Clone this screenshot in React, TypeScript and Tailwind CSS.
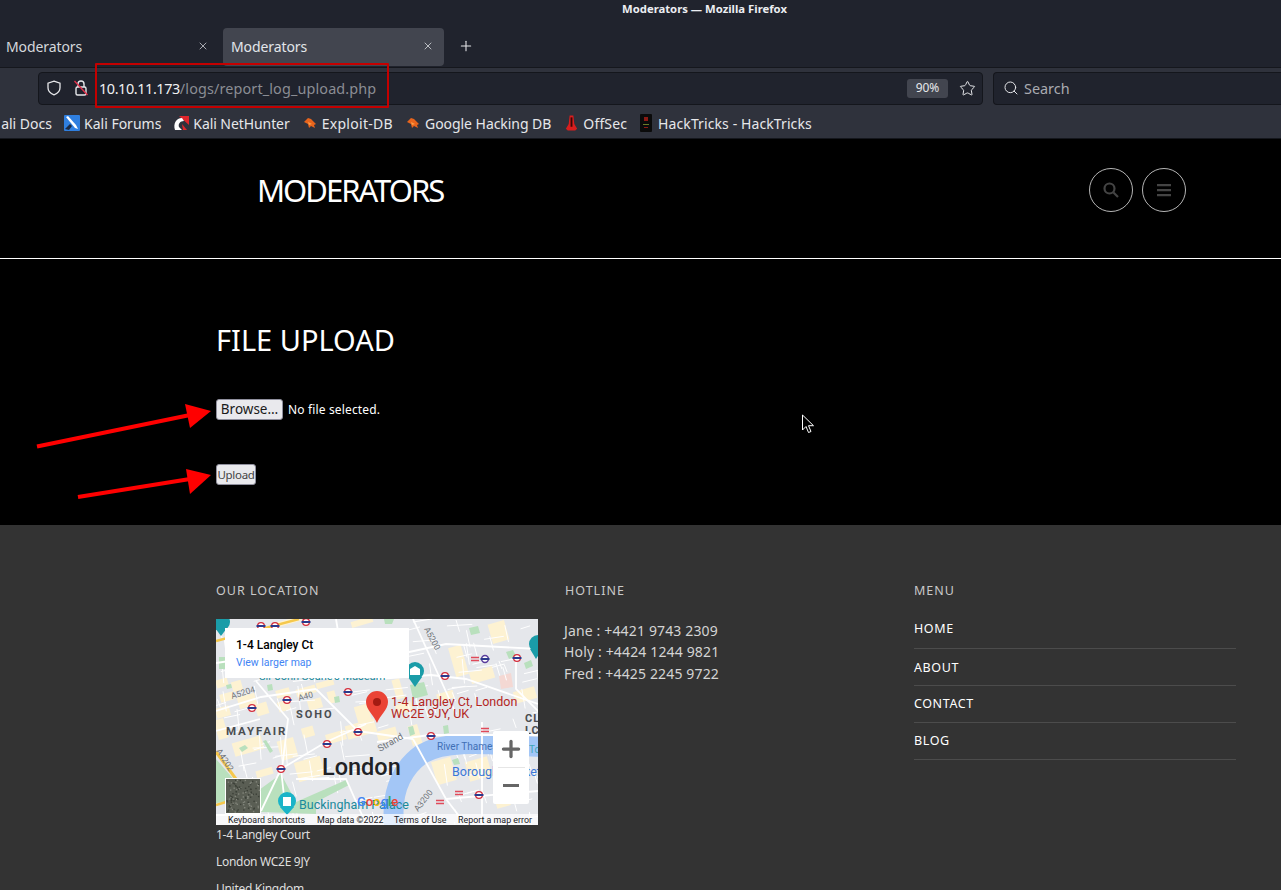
import { Plus, Search, Star, X } from "lucide-react";

const ui = "font-['Noto_Sans',sans-serif]";

const bookmarks = [
  { label: "Kali Forums", icon: "forums", gap: "ml-[12px]", inner: "gap-[4px]", track: "" },
  { label: "Kali NetHunter", icon: "hunter", gap: "ml-[12px]", inner: "gap-[4px]", track: "tracking-[-0.08px]" },
  { label: "Exploit-DB", icon: "bug", gap: "ml-[12px]", inner: "gap-[4px]", track: "tracking-[0.3px]" },
  { label: "Google Hacking DB", icon: "bug", gap: "ml-[12px]", inner: "gap-[4px]", track: "tracking-[-0.05px]" },
  { label: "OffSec", icon: "offsec", gap: "ml-[13px]", inner: "gap-[4px]", track: "tracking-[0.15px]" },
  { label: "HackTricks - HackTricks", icon: "tricks", gap: "ml-[13px]", inner: "gap-[6px]", track: "tracking-[0.1px]" },
];

function BookmarkIcon({ name }: { name: string }) {
  if (name === "forums") {
    return (
      <svg width="16" height="16" viewBox="0 0 16 16">
        <rect width="16" height="16" rx="1" fill="#2f7fe0" />
        <path d="M2 2l9 11 3 1-2-4L4 1z" fill="#fff" />
        <path d="M1 14l5-5 2 2-3 4z" fill="#1b2a44" />
      </svg>
    );
  }
  if (name === "hunter") {
    return (
      <svg width="16" height="16" viewBox="0 0 16 16">
        <path d="M6 1h10v9z" fill="#e0262c" />
        <path d="M2 15C0 9 3 3 9 3l2 3C7 6 5 9 6 12l3 3z" fill="#fff" />
        <path d="M9 9l5 6h-4z" fill="#e0262c" />
      </svg>
    );
  }
  if (name === "bug") {
    return (
      <svg width="16" height="16" viewBox="0 0 16 16">
        <path d="M2 7l4-4 3 1 5 5-2 1 1 3-4-2-2 2-1-4z" fill="#e8641c" />
        <path d="M6 7l4 2-3 1z" fill="#f9a04a" />
      </svg>
    );
  }
  if (name === "offsec") {
    return (
      <svg width="15" height="18" viewBox="0 0 16 18">
        <path d="M6 1h4l1 9 3 5-2 2H4l-2-2 3-5z" fill="#d81e1e" />
        <path d="M7 3h2v10H7z" fill="#3a0606" />
      </svg>
    );
  }
  return (
    <svg width="12" height="18" viewBox="0 0 12 18">
      <rect width="12" height="18" rx="1" fill="#0b0b0b" />
      <path d="M4 3h4v4H4z" fill="#8c1a14" />
      <path d="M3 10h6v1H3z" fill="#6b7a28" />
      <path d="M4 13h4v1H4z" fill="#8c1a14" />
    </svg>
  );
}

function BrowserChrome() {
  return (
    <div className={`${ui} text-[#e6e7ea]`}>
      <div className="flex h-[28px] items-start justify-center bg-[#20232d] pl-[128px] pt-px text-[11.3px] font-bold text-[#eceef2]">
        Moderators — Mozilla Firefox
      </div>
      <div className="flex h-[40px] items-stretch border-b border-[#15171d] bg-[#20232d] pb-px">
        <div className="flex w-[216px] items-center justify-between pb-[2px] pl-[6px] pr-[7px] text-[14px] tracking-[-0.1px] text-[#d5d7dc]">
          Moderators
          <X size={12} strokeWidth={1.5} />
        </div>
        <div className="ml-[7px] flex w-[221px] items-center justify-between rounded-[4px] bg-[#42454f] pb-[2px] pl-[8px] pr-[10px] text-[14px] tracking-[-0.1px] text-[#e3e5ea]">
          Moderators
          <X size={12} strokeWidth={1.5} />
        </div>
        <div className="ml-[14px] flex items-center pb-[2px]">
          <Plus size={16} strokeWidth={1.6} />
        </div>
      </div>
      <div className="flex h-[40px] items-center bg-[#2f323c] pl-[38px]">
        <div className="flex h-[33px] w-[945px] items-center rounded-[4px] border border-[#14161c] bg-[#20232d] pl-[7px] pr-[6px] text-[14.4px]">
          <svg width="16" height="16" viewBox="0 0 16 16" fill="none" stroke="#e6e7ea" strokeWidth="1.3">
            <path d="M8 1.2l6 2v4.6c0 3.4-2.6 5.8-6 7-3.4-1.2-6-3.6-6-7V3.2z" />
          </svg>
          <svg className="ml-[11px]" width="16" height="18" viewBox="0 0 16 18" fill="none">
            <path d="M5 8V5a3 3 0 0 1 6 0v3" stroke="#e6e7ea" strokeWidth="1.4" />
            <rect x="3" y="8" width="10" height="8" rx="1.5" stroke="#e6e7ea" strokeWidth="1.4" />
            <path d="M1.5 2l13 14" stroke="#e2304a" strokeWidth="1.4" />
          </svg>
          <span className="ml-[10px] mt-px tracking-[-0.4px] text-[#f0f1f3]">10.10.11.173</span>
          <span className="mt-px tracking-[0.13px] text-[#8b8d94]">/logs/report_log_upload.php</span>
          <span className="ml-auto flex h-[19px] w-[41px] items-center justify-center rounded-[3px] bg-[#42454f] text-[12px] text-[#e6e7ea]">
            90%
          </span>
          <Star className="ml-[11px]" size={17} strokeWidth={1.4} />
        </div>
        <div className="ml-[10px] flex h-[33px] flex-1 items-center rounded-l-[4px] border border-r-0 border-[#14161c] bg-[#20232d] pl-[9px] text-[14.4px] text-[#a9abb1]">
          <Search size={16} strokeWidth={1.5} className="text-[#e6e7ea]" />
          <span className="ml-[5px] mt-px">Search</span>
        </div>
      </div>
      <div className="flex h-[31px] items-center overflow-hidden border-b border-[#15171d] bg-[#2f323c] text-[14px] text-[#e6e7ea]">
        <span className="w-[52px] shrink-0 text-right">ali Docs</span>
        {bookmarks.map((b) => (
          <div key={b.label} className={`${b.gap} ${b.inner} flex shrink-0 items-center`}>
            <BookmarkIcon name={b.icon} />
            <span className={b.track}>{b.label}</span>
          </div>
        ))}
      </div>
    </div>
  );
}

// little seeded generator, the fine street net and the satellite speckle only need to look busy
function seeded(n: number, start: number) {
  let s = start;
  const out: number[] = [];
  for (let i = 0; i < n; i++) {
    s = (s * 16807) % 2147483647;
    out.push((s % 10000) / 10000);
  }
  return out;
}

const fineRoads = (() => {
  const r = seeded(720, 4711);
  const list: string[] = [];
  for (let i = 0; i < 180; i++) {
    const x = r[i * 4] * 322;
    const y = r[i * 4 + 1] * 206;
    const a = (r[i * 4 + 2] > 0.5 ? -0.35 : 1.2) + r[i * 4 + 3] * 0.3;
    const len = 8 + r[i * 4 + 3] * 18;
    list.push(`M${x.toFixed(1)} ${y.toFixed(1)}l${(Math.cos(a) * len).toFixed(1)} ${(Math.sin(a) * len).toFixed(1)}`);
  }
  return list;
})();

const speckle = (() => {
  const r = seeded(360, 99);
  const list: { x: number; y: number; c: string }[] = [];
  for (let i = 0; i < 120; i++) {
    list.push({
      x: 10 + r[i * 3] * 33,
      y: 160 + r[i * 3 + 1] * 33,
      c: r[i * 3 + 2] > 0.5 ? "#3c4038" : "#83867c",
    });
  }
  return list;
})();

const tube = [
  [90, 3], [45, 7], [59, 7], [132, 73], [71, 81], [36, 89], [111, 125], [65, 150],
  [142, 113], [215, 117], [229, 57], [301, 39], [263, 176],
];
const green = [
  "M0 140L20 163 10 183 0 184z", "M65 155L43 171 45 193 100 195 100 183 133 166 130 161 80 183z",
  "M3 38h6v12H3z", "M194 66l14-3 4 13-15 4z", "M51 66l5-1 1 6-5 1z", "M118 78l5-1 1 6-5 1z", "M10 66l5-1 1 4-5 1z",
  "M253 9l9-2 2 7-9 2z", "M290 33l7-2 3 6-7 3z", "M308 44l7-3 2 6-7 3z", "M168 0h10l-2 5h-7z",
  "M23 129l6-3 3 3-6 4z", "M47 122l3-1 7 11-3 2z", "M227 107l5-1 1 8-5 1z", "M192 108l5-1 2 8-5 2z", "M236 141l6-2 2 6-6 1z",
];
const pink = ["M283 57l12-3 2 14-12 2z"];
const yellow = [
  [0, 60, 12, 8], [16, 62, 10, 10], [4, 74, 14, 8], [22, 76, 18, 12], [60, 70, 14, 8], [80, 68, 20, 8], [62, 82, 12, 10],
  [92, 80, 14, 10], [112, 72, 8, 12], [100, 62, 18, 6], [0, 88, 14, 10], [40, 84, 12, 12], [236, 27, 13, 30], [274, 3, 17, 20],
  [178, 60, 8, 20], [221, 73, 17, 8], [254, 50, 24, 12], [298, 70, 22, 12], [17, 120, 30, 14], [63, 120, 17, 20], [80, 140, 27, 20],
  [40, 150, 17, 7], [110, 113, 20, 10], [130, 103, 30, 14], [86, 108, 12, 10], [218, 140, 20, 24], [251, 140, 23, 20], [194, 106, 10, 20],
  [161, 110, 20, 10], [280, 180, 14, 8], [135, 0, 22, 6], [60, 0, 26, 5], [0, 100, 10, 20], [140, 86, 14, 18], [180, 84, 16, 10],
];
const roads = [
  "M161 60L215 56 250 60 322 85", "M197 0L222 55", "M161 40L230 25 322 30", "M161 123L214 116 322 116", "M266 103V206",
  "M197 120L230 180 250 206", "M45 192L65 150 110 123 150 105", "M65 150L70 195", "M0 44L40 38 90 58 130 60", "M0 92L45 78 100 70",
  "M40 62L72 100 66 150", "M100 70L142 112", "M142 112L197 120", "M230 180L322 172", "M222 55L240 95", "M0 112L44 100",
  "M120 0L130 60", "M80 160L130 160 150 205", "M300 40L300 70 330 100", "M0 196H45",
];

function MapDrawing() {
  return (
    <svg width="322" height="206" viewBox="0 0 322 206" className="block" fontFamily="Roboto, sans-serif">
      <rect width="322" height="206" fill="#e5e7eb" />
      {yellow.map(([x, y, w, h]) => (
        <rect key={`${x}-${y}`} x={x} y={y} width={w} height={h} fill="#fdf2d2" transform={`rotate(-16 ${x + w / 2} ${y + h / 2})`} />
      ))}
      {pink.map((d) => <path key={d} d={d} fill="#f4d8d3" />)}
      {fineRoads.map((d) => <path key={d} d={d} fill="none" stroke="#fff" strokeWidth="1" />)}
      {green.map((d) => <path key={d} d={d} fill="#b9e0bd" />)}
      <path d="M179 212C174 180 182 152 206 135 228 122 256 124 326 128" fill="none" stroke="#a3c6f6" strokeWidth="20" />
      {roads.map((d) => <path key={d} d={d} fill="none" stroke="#fff" strokeWidth="1.8" />)}
      <path d="M0 22L30 14 83 0" fill="none" stroke="#f5c84c" strokeWidth="2.4" />
      <path d="M0 133L20 160" fill="none" stroke="#f5c84c" strokeWidth="3" />
      <path d="M0 186L10 183" fill="none" stroke="#f5c84c" strokeWidth="2.4" />
      {tube.map(([x, y]) => (
        <g key={`${x}-${y}`}>
          <circle cx={x} cy={y} r="3.4" fill="#fff" stroke="#d22c3b" strokeWidth="1.3" />
          <rect x={x - 4.5} y={y - 1} width="9" height="2" fill="#2b3a8c" />
        </g>
      ))}
      <circle cx="269" cy="40" r="3.4" fill="#fff" stroke="#5a3d9c" strokeWidth="1.5" />
      <rect x="264.5" y="39" width="9" height="2" fill="#2b3a8c" />
      <path d="M255 38.5h8M255 41.5h8M265 109.500h8M265 112.500h8M239 172.500h8M239 175.500h8M220 181.500h8M220 184.500h8" stroke="#e04a5a" strokeWidth="1.4" />
      <text x="16" y="80" fontSize="8.5" fill="#70757a" transform="rotate(-17 16 80)">A5204</text>
      <text x="83" y="82" fontSize="8.5" fill="#70757a" transform="rotate(-15 83 82)">A40</text>
      <text x="208" y="10" fontSize="8.5" fill="#70757a" transform="rotate(62 208 10)">A5200</text>
      <text x="0" y="132" fontSize="8.5" fill="#70757a" transform="rotate(58 0 132)">A4202</text>
      <text x="202" y="193" fontSize="8.5" fill="#70757a" transform="rotate(-52 202 193)">A3200</text>
      <text x="164" y="133" fontSize="9.5" fill="#70757a" transform="rotate(-30 164 133)">Strand</text>
      <text x="80" y="99" fontSize="11" fontWeight="700" letterSpacing="2" fill="#4a4d50">SOHO</text>
      <text x="10" y="116" fontSize="11.5" fontWeight="700" letterSpacing="1.9" fill="#4a4d50">MAYFAIR</text>
      <text x="106" y="156" fontSize="23.500" fontWeight="500" fill="#202124">London</text>
      <text x="221" y="131" fontSize="10" fill="#3f6fb5">River Thames</text>
      <text x="313" y="134" fontSize="10" fill="#3fa7b5">To</text>
      <text x="236" y="157" fontSize="12.5" fill="#3b78d8">Borough Market</text>
      <text x="309" y="103" fontSize="11" fontWeight="700" letterSpacing="1" fill="#4a4d50">CL</text>
      <text x="309" y="115" fontSize="11" fontWeight="700" letterSpacing="1" fill="#4a4d50">LC</text>
      <text x="83" y="190" fontSize="12.5" fill="#1a8a9c">Buckingham Palace</text>
      <text x="43" y="61" fontSize="11" fill="#1a8a9c">Sir John Soane's Museum</text>
      <path d="M161 104c-3-8-11-13-11-21a11 11 0 0 1 22 0c0 8-8 13-11 21z" fill="#ea4335" />
      <circle cx="161" cy="83" r="4" fill="#a31b12" />
      <text x="175" y="87" fontSize="12.5" fill="#b3261e">1-4 Langley Ct, London</text>
      <text x="175" y="99" fontSize="12.5" fill="#b3261e">WC2E 9JY, UK</text>
      <circle cx="199" cy="52" r="9" fill="#1a9ca8" />
      <path d="M192 58l7 10 7-10z" fill="#1a9ca8" />
      <path d="M194 56h10v-6l-5-3-5 3z" fill="#fff" />
      <circle cx="71" cy="182" r="9" fill="#1ab4c8" />
      <path d="M64 188l7 8 7-8z" fill="#1ab4c8" />
      <path d="M67 187h8v-9h-8z" fill="#fff" />
      <circle cx="5" cy="3" r="9" fill="#1a9ca8" />
      <path d="M-1 9l6 8 6-8z" fill="#1a9ca8" />
      <circle cx="322" cy="25" r="9" fill="#1a9ca8" />
      <path d="M314 30l6 10 6-10z" fill="#1a9ca8" />
      <text x="141" y="187" fontSize="13" fontWeight="500">
        <tspan fill="#4285f4">G</tspan>
        <tspan fill="#ea4335">o</tspan>
        <tspan fill="#fbbc05">o</tspan>
        <tspan fill="#4285f4">g</tspan>
        <tspan fill="#34a853">l</tspan>
        <tspan fill="#ea4335">e</tspan>
      </text>
      <rect x="0" y="195" width="322" height="11" fill="#fff" fillOpacity="0.72" />
      <g fontSize="8.9" fill="#202124">
        <text x="12" y="204">Keyboard shortcuts</text>
        <text x="101" y="204">Map data ©2022</text>
        <text x="178" y="204">Terms of Use</text>
        <text x="242" y="204">Report a map error</text>
      </g>
      <rect x="9.5" y="159.5" width="35" height="35" fill="#5a5e54" stroke="#fff" />
      {speckle.map((p) => <rect key={`${p.x}-${p.y}`} x={p.x} y={p.y} width="1.4" height="1.4" fill={p.c} />)}
    </svg>
  );
}

function Footer() {
  return (
    <div className="grid h-[365px] grid-cols-[349px_349px_322px] overflow-hidden bg-[#333333] pl-[216px] pt-[58px] font-['Noto_Sans',sans-serif] text-[#dcdcdc]">
      <div>
        <h4 className="text-[12.5px] leading-[16px] tracking-[1px] text-[#c9c9c9]">OUR LOCATION</h4>
        <div className="relative mt-[20px] w-[322px]">
          <MapDrawing />
          <div className="absolute left-[9px] top-[9px] h-[50px] w-[184px] bg-white pl-[11px] pt-[9px] font-['Roboto',sans-serif]">
            <div className="text-[12px] font-medium leading-[16px] text-black">1-4 Langley Ct</div>
            <div className="mt-[3px] text-[10.5px] leading-[14px] text-[#4285f4]">View larger map</div>
          </div>
          <div className="absolute left-[277px] top-[112px] flex h-[73px] w-[36px] flex-col items-center rounded-[2px] bg-white text-[#666]">
            <Plus size={26} strokeWidth={3} className="mt-[5px]" />
            <div className="mt-[5px] h-px w-[27px] bg-[#e6e6e6]" />
            <div className="mt-[16px] h-[3px] w-[16px] bg-[#666]" />
          </div>
        </div>
        <div className="text-[12px] leading-[27px] tracking-[-0.3px] text-[#dedede]">
          <p className="-mt-[4px]">1-4 Langley Court</p>
          <p>London WC2E 9JY</p>
          <p>United Kingdom</p>
        </div>
      </div>
      <div>
        <h4 className="text-[12.5px] leading-[16px] tracking-[1px] text-[#c9c9c9]">HOTLINE</h4>
        <div className="mt-[21px] -ml-px text-[14px] leading-[21.5px] tracking-[0.15px] text-[#d4d4d4]">
          <p>Jane : +4421 9743 2309</p>
          <p className="-mt-px">Holy : +4424 1244 9821</p>
          <p className="mt-px">Fred : +4425 2245 9722</p>
        </div>
      </div>
      <div>
        <h4 className="text-[12.5px] leading-[16px] tracking-[1px] text-[#c9c9c9]">MENU</h4>
        <ul className="mt-[13px] text-[12.5px] tracking-[0.6px] text-white">
          <li className="flex h-[37px] items-center border-b border-[#4c4c4c] pb-[2px]">HOME</li>
          <li className="flex h-[37px] items-center border-b border-[#4c4c4c] pt-[2px]">ABOUT</li>
          <li className="flex h-[37px] items-center border-b border-[#4c4c4c]">CONTACT</li>
          <li className="flex h-[37px] items-center border-b border-[#4c4c4c]">BLOG</li>
        </ul>
      </div>
    </div>
  );
}

export default function App() {
  return (
    <div className="relative h-[890px] w-[1281px] overflow-hidden bg-black">
      <BrowserChrome />
      <header className="flex h-[120px] items-center justify-between border-b border-white pb-[18px] pl-[257px] pr-[95px] font-['Noto_Sans',sans-serif] text-white">
        <h1 className="mt-[2px] text-[31px] leading-none tracking-[-2px]">MODERATORS</h1>
        <div className="flex gap-[9px]">
          <button className="flex h-[44px] w-[44px] items-center justify-center rounded-full border border-[#b5b5b5]">
            <svg width="16" height="16" viewBox="0 0 16 16" fill="none" stroke="#444" strokeWidth="2.2">
              <circle cx="6.5" cy="6.5" r="5" />
              <path d="M10.5 10.5l4.5 4.5" />
            </svg>
          </button>
          <button className="flex h-[44px] w-[44px] items-center justify-center rounded-full border border-[#b5b5b5]">
            <svg width="14" height="14" viewBox="0 0 14 14" fill="#444">
              <path d="M0 1h14v2.2H0zM0 6h14v2.2H0zM0 11h14v2.2H0z" />
            </svg>
          </button>
        </div>
      </header>
      <main className="h-[266px] pl-[216px] pt-[63px] font-['Noto_Sans',sans-serif] text-white">
        <h2 className="text-[29px] leading-[36px]">FILE UPLOAD</h2>
        <div className="mt-[41px] flex items-center">
          <button className="h-[21px] w-[67px] rounded-[3px] border border-[#8f8f9d] bg-[#e9e9ed] text-[13.5px] leading-none text-[#1a1a1a]">
            Browse…
          </button>
          <span className="ml-[5px] text-[12px] tracking-[0.15px]">No file selected.</span>
        </div>
        <button className="mt-[44px] block h-[21px] w-[40px] rounded-[3px] border border-[#8f8f9d] bg-[#e9e9ed] text-[11.5px] leading-none tracking-[-0.3px] text-[#444]">
          Upload
        </button>
      </main>
      <Footer />
      {/* annotations drawn on top of the screenshot */}
      <div className="absolute left-[95px] top-[63px] h-[45px] w-[294px] rounded-[1px] border-2 border-[#c40000]" />
      <svg className="absolute left-0 top-[400px]" width="220" height="110" viewBox="0 0 220 110">
        <path d="M37 46.5L190 15" stroke="#f00" strokeWidth="4" />
        <path d="M211 11L185 4l5 24z" fill="#f00" />
        <path d="M78 97L190 79" stroke="#f00" strokeWidth="4" />
        <path d="M211 75L186 69l4 25z" fill="#f00" />
      </svg>
      <svg className="absolute left-[801px] top-[414px]" width="14" height="20" viewBox="0 0 14 20">
        <path d="M1.5 1v15l3.5-3.5 2.5 6 2.5-1-2.5-5.8h5z" fill="#000" stroke="#fff" strokeWidth="1" />
      </svg>
    </div>
  );
}
